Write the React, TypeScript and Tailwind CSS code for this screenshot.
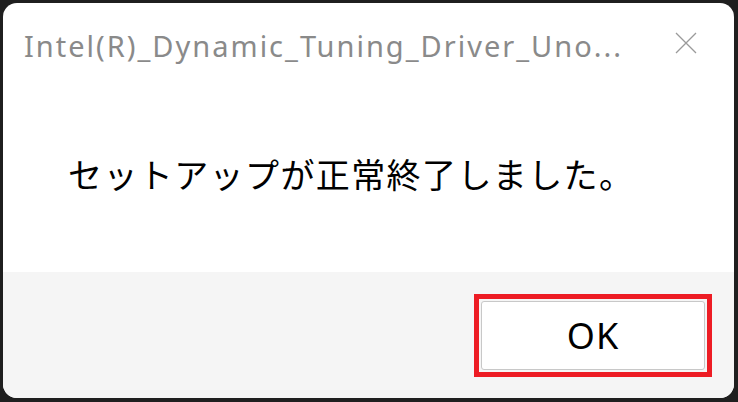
import React from "react";

export default function App() {
  return (
    <div className="w-[738px] h-[402px] bg-[#1f1f1f] p-[3px] pr-[4px] pb-[4px]">
      <div className="h-full flex flex-col rounded-[14px] overflow-hidden bg-white">
        <div className="flex items-start justify-between pl-[21px] pr-[37px] pt-[26px]">
          <div className="text-[29px] leading-[34px] text-[#8a8a8a] font-['Noto_Sans',sans-serif] tracking-[2px] whitespace-nowrap">
            Intel(R)_Dynamic_Tuning_Driver_Uno...
          </div>
          <svg width="22" height="22" viewBox="0 0 22 22" className="mt-[3px] shrink-0">
            <path d="M1 1 L21 21 M21 1 L1 21" stroke="#9a9a9a" strokeWidth="1.3" />
          </svg>
        </div>
        <div className="flex-1 flex items-center pl-[65px] pt-[12px]">
          <p className="text-[34px] leading-none text-black font-['Noto_Sans_CJK_JP',sans-serif] tracking-[1.4px]">
            セットアップが正常終了しました。
          </p>
        </div>
        <div className="h-[126px] bg-[#f5f5f5] flex justify-end items-start pt-[22px] pr-[22px]">
          <div className="border-[5px] border-[#ed1c24] p-[2px] w-[238px] h-[83px]">
            <button className="w-full h-full bg-white border border-[#c8c8c8] rounded-[3px] text-[36px] leading-none text-black font-['Noto_Sans',sans-serif] tracking-[1px]">
              OK
            </button>
          </div>
        </div>
      </div>
    </div>
  );
}
